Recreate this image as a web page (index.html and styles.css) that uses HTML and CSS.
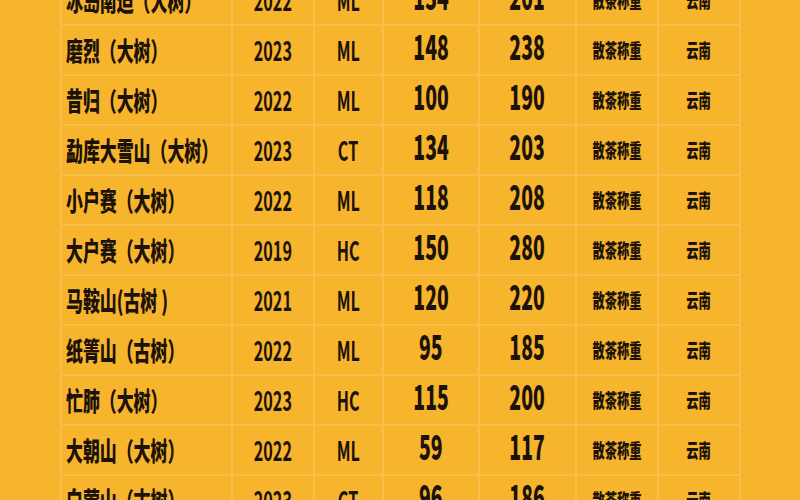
FILE: index.html
```html
<!DOCTYPE html>
<html lang="zh-CN">
<head>
<meta charset="utf-8">
<title>茶价表</title>
<link rel="stylesheet" href="styles.css">
</head>
<body>
<table class="price-table">
  <colgroup>
    <col class="c-name"><col class="c-year"><col class="c-code"><col class="c-n1"><col class="c-n2"><col class="c-type"><col class="c-place">
  </colgroup>
  <tbody>
    <tr><td class="name"><span>冰岛南迫（大树）</span></td><td class="year"><span>2022</span></td><td class="code"><span>ML</span></td><td class="num"><span>134</span></td><td class="num"><span>201</span></td><td class="small"><span>散茶称重</span></td><td class="small"><span>云南</span></td></tr>
    <tr><td class="name"><span>磨烈（大树）</span></td><td class="year"><span>2023</span></td><td class="code"><span>ML</span></td><td class="num"><span>148</span></td><td class="num"><span>238</span></td><td class="small"><span>散茶称重</span></td><td class="small"><span>云南</span></td></tr>
    <tr><td class="name"><span>昔归（大树）</span></td><td class="year"><span>2022</span></td><td class="code"><span>ML</span></td><td class="num"><span>100</span></td><td class="num"><span>190</span></td><td class="small"><span>散茶称重</span></td><td class="small"><span>云南</span></td></tr>
    <tr><td class="name"><span>勐库大雪山（大树）</span></td><td class="year"><span>2023</span></td><td class="code"><span>CT</span></td><td class="num"><span>134</span></td><td class="num"><span>203</span></td><td class="small"><span>散茶称重</span></td><td class="small"><span>云南</span></td></tr>
    <tr><td class="name"><span>小户赛（大树）</span></td><td class="year"><span>2022</span></td><td class="code"><span>ML</span></td><td class="num"><span>118</span></td><td class="num"><span>208</span></td><td class="small"><span>散茶称重</span></td><td class="small"><span>云南</span></td></tr>
    <tr><td class="name"><span>大户赛（大树）</span></td><td class="year"><span>2019</span></td><td class="code"><span>HC</span></td><td class="num"><span>150</span></td><td class="num"><span>280</span></td><td class="small"><span>散茶称重</span></td><td class="small"><span>云南</span></td></tr>
    <tr><td class="name"><span>马鞍山(古树 )</span></td><td class="year"><span>2021</span></td><td class="code"><span>ML</span></td><td class="num"><span>120</span></td><td class="num"><span>220</span></td><td class="small"><span>散茶称重</span></td><td class="small"><span>云南</span></td></tr>
    <tr><td class="name"><span>纸箐山（古树）</span></td><td class="year"><span>2022</span></td><td class="code"><span>ML</span></td><td class="num"><span>95</span></td><td class="num"><span>185</span></td><td class="small"><span>散茶称重</span></td><td class="small"><span>云南</span></td></tr>
    <tr><td class="name"><span>忙肺（大树）</span></td><td class="year"><span>2023</span></td><td class="code"><span>HC</span></td><td class="num"><span>115</span></td><td class="num"><span>200</span></td><td class="small"><span>散茶称重</span></td><td class="small"><span>云南</span></td></tr>
    <tr><td class="name"><span>大朝山（大树）</span></td><td class="year"><span>2022</span></td><td class="code"><span>ML</span></td><td class="num"><span>59</span></td><td class="num"><span>117</span></td><td class="small"><span>散茶称重</span></td><td class="small"><span>云南</span></td></tr>
    <tr><td class="name"><span>白莺山（古树）</span></td><td class="year"><span>2023</span></td><td class="code"><span>CT</span></td><td class="num"><span>96</span></td><td class="num"><span>186</span></td><td class="small"><span>散茶称重</span></td><td class="small"><span>云南</span></td></tr>
  </tbody>
</table>
</body>
</html>
```
FILE: styles.css
```css
html, body {
  margin: 0;
  padding: 0;
  background: #f6b52c;
  overflow: hidden;
}
body {
  font-family: "Noto Sans CJK SC", "Noto Sans", sans-serif;
  color: #1d1209;
  font-weight: 700;
}
.price-table {
  margin: -26px 0 0 60px;
  width: 679px;
  table-layout: fixed;
  border-collapse: collapse;
}
.c-name { width: 171px; }
.c-year { width: 82px; }
.c-code { width: 69px; }
.c-n1 { width: 96px; }
.c-n2 { width: 97px; }
.c-type { width: 82px; }
.c-place { width: 82px; }
.price-table td {
  height: 48px;
  padding: 0;
  border: 2px solid #f8c04a;
  text-align: center;
  vertical-align: middle;
  white-space: nowrap;
  overflow: visible;
  line-height: 1;
}
.price-table td span {
  display: inline-block;
  transform: scaleX(0.62);
  transform-origin: center;
}
.price-table td.name {
  text-align: left;
  padding-left: 4px;
}
.price-table td.name span {
  font-size: 26px;
  font-weight: 900;
  transform-origin: left center;
  transform: scaleX(0.65);
}
.price-table td.year,
.price-table td.code {
  height: 46px;
  padding-bottom: 2px;
}
.price-table td.year span,
.price-table td.code span {
  font-size: 27px;
  transform: scaleX(0.6);
}
.price-table td.num {
  height: 40px;
  padding-bottom: 8px;
}
.price-table td.num span {
  font-size: 34px;
  font-weight: 900;
  transform: scaleX(0.57);
}
.price-table td.small span {
  font-size: 19.5px;
  font-weight: 900;
  transform: scaleX(0.63);
}
```
